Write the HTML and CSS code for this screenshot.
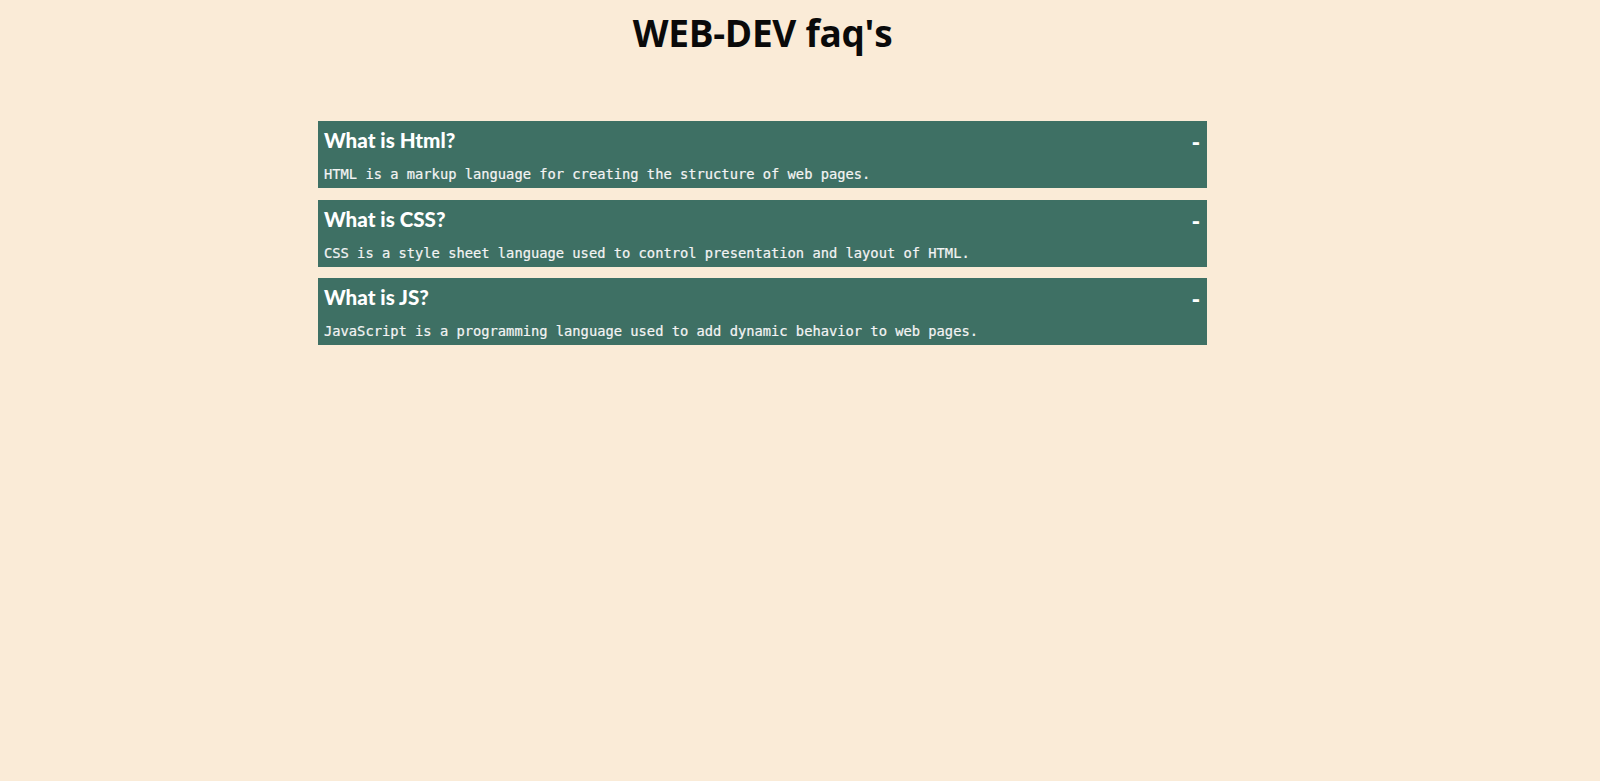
FILE: index.html
```html
<!DOCTYPE html>
<html lang="en">
<head>
<meta charset="utf-8">
<title>WEB-DEV faq's</title>
<link rel="stylesheet" href="styles.css">
</head>
<body>
<div class="page">
  <h1 class="title">WEB-DEV faq's</h1>
  <div class="faqs">
    <div class="faq">
      <div class="question"><h3>What is Html?</h3><span class="toggle">-</span></div>
      <p class="answer">HTML is a markup language for creating the structure of web pages.</p>
    </div>
    <div class="faq">
      <div class="question"><h3>What is CSS?</h3><span class="toggle">-</span></div>
      <p class="answer">CSS is a style sheet language used to control presentation and layout of HTML.</p>
    </div>
    <div class="faq">
      <div class="question"><h3>What is JS?</h3><span class="toggle">-</span></div>
      <p class="answer">JavaScript is a programming language used to add dynamic behavior to web pages.</p>
    </div>
  </div>
</div>
</body>
</html>
```

FILE: styles.css
```css
html, body {
  margin: 0;
  padding: 0;
  background: #faebd7;
}
body {
  height: 781px;
  overflow: hidden;
}
.page {
  width: 1525px;
  display: flex;
  flex-direction: column;
  align-items: center;
}
.title {
  margin: 8px 0 0 0;
  font-family: "Open Sans", "Noto Sans", sans-serif;
  font-weight: 700;
  font-size: 37px;
  line-height: 50px;
  color: #0a0a0a;
  letter-spacing: -0.3px;
}
.faqs {
  margin-top: 63px;
  width: 889px;
  display: flex;
  flex-direction: column;
  gap: 11.5px;
}
.faq {
  background: #3e7064;
  color: #f4f4f4;
  padding: 6px 7px 5px 6px;
  height: 67px;
  box-sizing: border-box;
}
.question {
  display: flex;
  justify-content: space-between;
  align-items: center;
  height: 26px;
}
.question h3 {
  margin: 0;
  font-family: "Lato", "Noto Sans", sans-serif;
  font-weight: 900;
  font-size: 20.6px;
  line-height: 26px;
  color: #ffffff;
}
.toggle {
  font-family: "DejaVu Sans", sans-serif;
  font-weight: 700;
  font-size: 20px;
  line-height: 26px;
  margin-top: 4px;
  color: #ffffff;
}
.answer {
  margin: 12px 0 0 0;
  font-family: "DejaVu Sans Mono", monospace;
  font-size: 13.75px;
  line-height: 18px;
  color: #f4f4f4;
  -webkit-text-stroke: 0.2px #f4f4f4;
}
```
